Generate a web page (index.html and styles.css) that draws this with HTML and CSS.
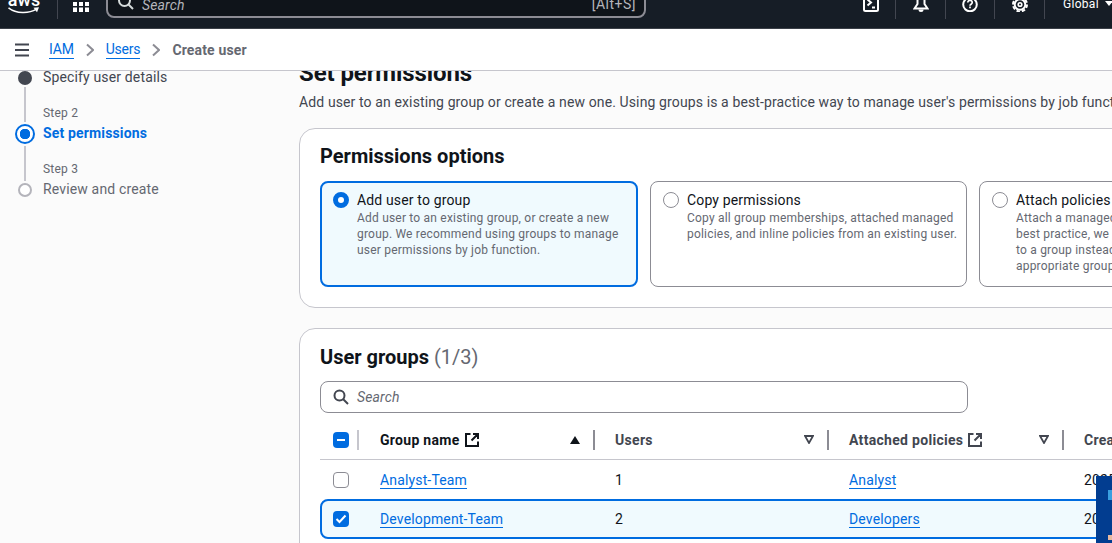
FILE: index.html
```html
<!DOCTYPE html>
<html lang="en">
<head>
  <meta charset="UTF-8" />
  <meta name="viewport" content="width=device-width, initial-scale=1.0" />
  <title>Create user | IAM</title>
  <link rel="stylesheet" href="styles.css">
</head>
<body>
  <header class="topbar">
    <div class="logo">
      <span class="logo-text">aws</span>
      <svg class="logo-smile" width="32" height="7" viewBox="0 0 32 7"><path d="M.5 .8c8 6 20 6 28 1.400" fill="none" stroke="#fff" stroke-width="1.500"/><path d="M25.500 .8l5.500-.6-2 5z" fill="#fff"/></svg>
    </div>
    <span class="bar-sep sep-logo"></span>
    <svg class="apps" width="16" height="10" viewBox="0 0 16 10" fill="#fff"><rect width="4" height="4"/><rect x="6" width="4" height="4"/><rect x="12" width="4" height="4"/><rect y="5.500" width="4" height="4.500"/><rect x="6" y="5.500" width="4" height="4.500"/><rect x="12" y="5.500" width="4" height="4.500"/></svg>
    <div class="top-search">
      <svg width="16" height="16" viewBox="0 0 16 16" fill="none" stroke="#d5dbdb" stroke-width="2"><circle cx="6.500" cy="6.500" r="5.500"/><path d="M10.500 10.500L15 15"/></svg>
      <span class="top-search-text">Search</span>
      <span class="top-search-key">[Alt+S]</span>
    </div>
    <div class="top-actions">
      <svg class="top-icon" width="16" height="16" viewBox="0 0 16 16" fill="none" stroke="#fff" stroke-width="2"><rect x="1" y="-4" width="14" height="19" rx="1.500"/><path d="M4.500 3.500L8 6.500 4.500 9.500M9 11.500h3"/></svg>
      <span class="bar-sep"></span>
      <svg class="top-icon" width="16" height="16" viewBox="0 0 16 16" fill="none" stroke="#fff" stroke-width="2"><path d="M4.500-4V8L1.500 12.500h13L11.500 8V-4"/><path d="M5.500 13.500h5a2.500 2.500 0 0 1-5 0z" fill="#fff" stroke="none"/></svg>
      <span class="bar-sep"></span>
      <svg class="top-icon" width="16" height="16" viewBox="0 0 16 16" fill="none" stroke="#fff" stroke-width="2"><circle cx="8" cy="8.500" r="6.800"/><path d="M5.800 6.500c0-3 4.600-2.800 4.400 0 0 1.700-2.200 1.700-2.200 3.300M8 10.500v1.800" stroke-width="1.700"/></svg>
      <span class="bar-sep"></span>
      <svg class="top-icon" width="16" height="16" viewBox="0 0 16 16" fill="none" stroke="#fff"><circle cx="8" cy="8.500" r="5.300" stroke-width="2"/><circle cx="8" cy="8.500" r="7" stroke-width="2" stroke-dasharray="3.500 1.990"/><circle cx="8" cy="8.500" r="1.800" stroke-width="1.600"/></svg>
      <span class="bar-sep"></span>
      <span class="region">Global</span>
      <span class="region-caret"></span>
    </div>
  </header>

  <nav class="crumbs">
    <svg class="menu-icon" width="16" height="14" viewBox="0 0 16 14" fill="none" stroke="#424650" stroke-width="2"><path d="M0 1.500h14M0 7h14M0 12.500h14"/></svg>
    <a class="crumb-link" href="#">IAM</a>
    <svg class="crumb-arrow" width="8" height="14" viewBox="0 0 8 14" fill="none" stroke="#8c8c94" stroke-width="2"><path d="M1 1.500L7 7l-6 5.500"/></svg>
    <a class="crumb-link" href="#">Users</a>
    <svg class="crumb-arrow" width="8" height="14" viewBox="0 0 8 14" fill="none" stroke="#8c8c94" stroke-width="2"><path d="M1 1.500L7 7l-6 5.500"/></svg>
    <span class="crumb-current">Create user</span>
  </nav>

  <div class="layout">
    <aside class="steps">
      <div class="step step-done">
        <span class="step-title">Specify user details</span>
      </div>
      <div class="step step-active">
        <span class="step-num">Step 2</span>
        <span class="step-title">Set permissions</span>
      </div>
      <div class="step step-todo">
        <span class="step-num">Step 3</span>
        <span class="step-title">Review and create</span>
      </div>
    </aside>

    <main class="content">
      <h1>Set permissions</h1>
      <p class="lead">Add user to an existing group or create a new one. Using groups is a best-practice way to manage user's permissions by job functions.</p>

      <section class="card">
        <h2>Permissions options</h2>
        <div class="tiles">
          <div class="tile tile-on">
            <span class="radio radio-on"></span>
            <div>
              <div class="tile-title">Add user to group</div>
              <div class="tile-desc">Add user to an existing group, or create a new group. We recommend using groups to manage user permissions by job function.</div>
            </div>
          </div>
          <div class="tile">
            <span class="radio"></span>
            <div>
              <div class="tile-title">Copy permissions</div>
              <div class="tile-desc">Copy all group memberships, attached managed policies, and inline policies from an existing user.</div>
            </div>
          </div>
          <div class="tile">
            <span class="radio"></span>
            <div>
              <div class="tile-title">Attach policies directly</div>
              <div class="tile-desc">Attach a managed policy to your new user. As a best practice, we recommend attaching policies to a group instead. Then, add the user to the appropriate group.</div>
            </div>
          </div>
        </div>
      </section>

      <section class="card card-groups">
        <h2>User groups <span class="count">(1/3)</span></h2>
        <div class="search">
          <svg width="16" height="16" viewBox="0 0 16 16" fill="none" stroke="#424650" stroke-width="2"><circle cx="6.500" cy="6.500" r="5"/><path d="M10 10l5 5"/></svg>
          <span>Search</span>
        </div>

        <div class="row row-head">
          <div class="cell cell-check"><span class="check check-on"><svg width="10" height="10" viewBox="0 0 10 10"><path d="M1 5h8" stroke="#fff" stroke-width="2"/></svg></span></div>
          <div class="cell cell-head head-active">
            <span>Group name</span>
            <svg class="ext" width="14" height="14" viewBox="0 0 14 14" fill="none" stroke="#0f141a" stroke-width="2"><path d="M5.500 1H1v12h12V8.500M8 1h5v5M13 1L6.500 7.500"/></svg>
            <svg class="sort" width="10" height="8" viewBox="0 0 10 8"><path d="M5 0l5 8H0z" fill="#0f141a"/></svg>
          </div>
          <div class="cell cell-head">
            <span>Users</span>
            <svg class="sort" width="10" height="9" viewBox="0 0 10 9"><path d="M1 1h8L5 8z" fill="none" stroke="#424650" stroke-width="1.800"/></svg>
          </div>
          <div class="cell cell-head">
            <span>Attached policies</span>
            <svg class="ext" width="14" height="14" viewBox="0 0 14 14" fill="none" stroke="#424650" stroke-width="2"><path d="M5.500 1H1v12h12V8.500M8 1h5v5M13 1L6.500 7.500"/></svg>
            <svg class="sort" width="10" height="9" viewBox="0 0 10 9"><path d="M1 1h8L5 8z" fill="none" stroke="#424650" stroke-width="1.800"/></svg>
          </div>
          <div class="cell cell-head cell-last"><span>Created</span></div>
        </div>

        <div class="row">
          <div class="cell cell-check"><span class="check"></span></div>
          <div class="cell"><a href="#">Analyst-Team</a></div>
          <div class="cell">1</div>
          <div class="cell"><a href="#">Analyst</a></div>
          <div class="cell">2025-01-12</div>
        </div>

        <div class="row row-on">
          <div class="cell cell-check"><span class="check check-on"><svg width="12" height="10" viewBox="0 0 12 10" fill="none"><path d="M1.500 5l3 3 6-6.500" stroke="#fff" stroke-width="2"/></svg></span></div>
          <div class="cell"><a href="#">Development-Team</a></div>
          <div class="cell">2</div>
          <div class="cell"><a href="#">Developers</a></div>
          <div class="cell">2025-01-12</div>
        </div>
      </section>
    </main>
  </div>

  <div class="corner-widget"><span class="corner-a"></span><span class="corner-b"></span></div>
</body>
</html>
```

FILE: styles.css
```css
* {
  margin: 0;
  padding: 0;
  box-sizing: border-box;
}

html, body {
  height: 100%;
  overflow: hidden;
}

body {
  font-family: Roboto, "Noto Sans", sans-serif;
  font-size: 14px;
  line-height: 20px;
  letter-spacing: 0.15px;
  background: #fbfbfb;
  color: #0f141a;
  display: flex;
  flex-direction: column;
}

a {
  color: #006ce0;
  text-decoration: none;
  border-bottom: 1px solid #006ce0;
}

/* top bar, scrolled so its upper part is cut off */
.topbar {
  flex: none;
  height: 29px;
  background: #161d26;
  border-bottom: 1px solid #3b4048;
  display: flex;
  align-items: flex-end;
  padding: 0 0 9px 8px;
  overflow: hidden;
  color: #fff;
}

.logo {
  width: 32px;
  height: 30px;
  padding-bottom: 5px;
  display: flex;
  flex-direction: column;
  align-items: center;
  justify-content: flex-end;
}

.logo-text {
  font-weight: 500;
  font-size: 18px;
  line-height: 13px;
  letter-spacing: 0;
}

.logo-smile {
  flex: none;
  margin-top: 1px;
}

.bar-sep {
  flex: none;
  width: 1px;
  height: 20px;
  background: #424650;
}

.sep-logo {
  margin-left: 17px;
}

.apps {
  flex: none;
  margin: 0 17px 7px 15px;
}

.top-search {
  flex: none;
  width: 540px;
  height: 36px;
  border: 2px solid #8c8c94;
  border-radius: 8px;
  background: #0f141a;
  display: flex;
  align-items: flex-end;
  padding: 0 8px 4px 10px;
  margin-bottom: 1px;
  font-size: 14px;
  color: #b4b4bb;
}

.top-search svg {
  flex: none;
  margin-bottom: 2px;
}

.top-search-text {
  font-style: italic;
  margin: 0 0 -1px 8px;
  line-height: 16px;
}

.top-search-key {
  margin-left: auto;
  line-height: 16px;
  letter-spacing: 0.5px;
}

.top-actions {
  flex: 1;
  display: flex;
  align-items: flex-end;
  padding-left: 201px;
}

.top-actions .bar-sep {
  margin-right: 0.5px;
}

.top-icon {
  flex: none;
  margin: 0 16px 7px;
}

.region {
  margin: 0 0 7px 18px;
  font-size: 12px;
  line-height: 16px;
  letter-spacing: 0.3px;
}

.region-caret {
  width: 0;
  height: 0;
  border-left: 4px solid transparent;
  border-right: 4px solid transparent;
  border-top: 5px solid #fff;
  margin: 0 0 13px 6px;
}

/* breadcrumbs */
.crumbs {
  flex: none;
  height: 42px;
  background: #fff;
  border-bottom: 1px solid #c6c6cd;
  display: flex;
  align-items: center;
  padding-left: 15px;
  position: relative;
  z-index: 2;
}

.menu-icon {
  margin-right: 18px;
}

.crumb-link {
  line-height: 17px;
  letter-spacing: -0.2px;
}

.crumb-arrow {
  margin: 0 12px;
}

.crumb-current {
  color: #656871;
  font-weight: 700;
}

.layout {
  flex: 1;
  min-height: 0;
  display: flex;
  overflow: hidden;
}

/* wizard steps */
.steps {
  flex: none;
  width: 299px;
  margin-top: -4px;
  padding-left: 43px;
}

.step {
  position: relative;
  display: flex;
  flex-direction: column;
  padding-bottom: 16px;
  color: #424650;
}

.step-num {
  font-size: 12px;
  line-height: 16px;
  margin: 2px 0;
  letter-spacing: 0.2px;
  color: #656871;
}

.step::before {
  content: '';
  position: absolute;
  left: -25px;
  box-sizing: border-box;
  border-radius: 50%;
}

.step::after {
  content: '';
  position: absolute;
  left: -19px;
  width: 2px;
  background: #c6c6cd;
}

.step-done::before {
  top: 4px;
  width: 14px;
  height: 14px;
  background: #424650;
}

.step-done::after {
  top: 20px;
  height: 35px;
}

.step-active {
  color: #006ce0;
}

.step-active .step-title {
  font-weight: 700;
}

.step-active::before {
  top: 21px;
  left: -28px;
  width: 20px;
  height: 20px;
  border: 2px solid #006ce0;
  background: radial-gradient(circle, #006ce0 0 5px, #fff 5.500px);
}

.step-active::after {
  top: 43px;
  height: 35px;
}

.step-todo {
  color: #656871;
}

.step-todo::before {
  top: 24px;
  width: 14px;
  height: 14px;
  border: 2px solid #b4b4bb;
  background: #fff;
}

.step-todo::after {
  display: none;
}

/* main column */
.content {
  flex: none;
  width: 1000px;
  margin-top: -13px;
}

h1 {
  font-size: 24px;
  line-height: 30px;
  font-weight: 700;
  letter-spacing: -0.1px;
  margin-bottom: 4px;
}

.lead {
  white-space: nowrap;
  letter-spacing: 0.12px;
  color: #424650;
  margin-bottom: 16px;
}

.card {
  background: #fff;
  border: 1px solid #c6c6cd;
  border-radius: 16px;
  padding: 15px 20px 20px;
  margin-bottom: 20px;
}

h2 {
  font-size: 20px;
  line-height: 24px;
  font-weight: 700;
  letter-spacing: 0;
  margin-bottom: 13px;
}

.tiles {
  display: grid;
  grid-template-columns: 318px 317px 318px;
  gap: 12px;
}

.tile {
  height: 106px;
  border: 1px solid #8c8c94;
  border-radius: 8px;
  padding: 8px 8px 8px 12px;
  display: flex;
  gap: 8px;
}

.tile-on {
  border: 2px solid #006ce0;
  background: #f0fafe;
  padding: 7px 11px;
}

.radio {
  flex: none;
  width: 16px;
  height: 16px;
  margin-top: 2px;
  border: 1px solid #8c8c94;
  border-radius: 50%;
  background: #fff;
}

.radio-on {
  border: 5px solid #006ce0;
}

.tile-desc {
  font-size: 12px;
  line-height: 16px;
  letter-spacing: 0.2px;
  color: #656871;
}

.card-groups {
  padding-top: 16px;
  padding-bottom: 60px;
  margin-bottom: 0;
}

.card-groups h2 {
  margin-bottom: 12px;
}

.count {
  font-weight: 400;
  color: #656871;
}

.search {
  width: 648px;
  height: 32px;
  border: 1px solid #8c8c94;
  border-radius: 8px;
  display: flex;
  align-items: center;
  gap: 8px;
  padding-left: 12px;
  font-style: italic;
  color: #656871;
  margin-bottom: 7px;
}

/* table */
.row {
  display: grid;
  grid-template-columns: 39px 235px 234px 235px 1fr;
  height: 39px;
  align-items: center;
}

.row-head {
  height: 40px;
  border-bottom: 1px solid #c6c6cd;
}

.row-on {
  height: 40px;
  background: #f0fafe;
  border: 2px solid #006ce0;
  border-radius: 8px;
  grid-template-columns: 37px 235px 234px 235px 1fr;
}

.cell {
  padding-left: 21px;
}

.cell-check {
  padding-left: 13px;
  display: flex;
}

.row-on .cell-check {
  padding-left: 11px;
}

.row-head .cell {
  height: 20px;
  border-right: 2px solid #8c8c94;
  display: flex;
  align-items: center;
  padding-right: 13px;
  margin-right: -1px;
}

.row-head .cell-check {
  padding-right: 0;
  margin-right: 0;
  border-right-color: #c6c6cd;
}

.row-head .cell-last {
  border-right: 0;
}

.cell-head {
  font-weight: 700;
  letter-spacing: 0.3px;
  color: #424650;
}

.head-active {
  color: #0f141a;
}

.ext {
  flex: none;
  margin-left: 5px;
}

.sort {
  flex: none;
  margin-left: auto;
}

.check {
  width: 16px;
  height: 16px;
  border: 1px solid #8c8c94;
  border-radius: 4px;
  background: #fff;
  display: flex;
  align-items: center;
  justify-content: center;
}

.check-on {
  border: 0;
  background: #006ce0;
}

.corner-widget {
  position: absolute;
  left: 1096px;
  top: 476px;
  width: 16px;
  height: 67px;
  background: #023d90;
}

.corner-a {
  position: absolute;
  left: 12px;
  top: 14px;
  width: 4px;
  height: 10px;
  background: #3a9fe0;
}

.corner-b {
  position: absolute;
  left: 12px;
  top: 59px;
  width: 4px;
  height: 5px;
  background: #e8b9a0;
}
```
